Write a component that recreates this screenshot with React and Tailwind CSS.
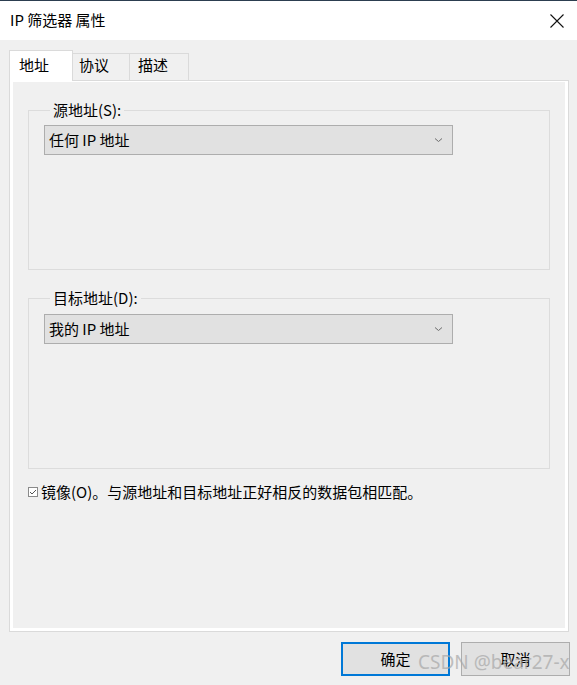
import React from "react";

const font = { fontFamily: '"Noto Sans CJK SC", "Noto Sans", sans-serif' };

function Chevron() {
  return (
    <svg width="9" height="6" viewBox="0 0 9 6" className="mr-[9px]">
      <path d="M1 1.5l3.5 3 3.5-3" fill="none" stroke="#6d6d6d" strokeWidth="1" />
    </svg>
  );
}

function Select({ value }) {
  return (
    <div className="flex h-[30px] w-[409px] items-center justify-between border border-[#adadad] bg-[#e1e1e1] pl-[4px] text-[15px] text-black">
      <span>{value}</span>
      <Chevron />
    </div>
  );
}

function Group({ label, value, tall }) {
  return (
    <fieldset
      className={
        tall
          ? "h-[181px] w-[522px] border border-[#dcdcdc] pl-[15px]"
          : "h-[170px] w-[522px] border border-[#dcdcdc] pl-[15px]"
      }
    >
      <legend className="ml-[6px] px-[3px] text-[15px] leading-[20px] text-black">
        {label}
      </legend>
      <div className={tall ? "mt-[6px]" : "mt-[5px]"}>
        <Select value={value} />
      </div>
    </fieldset>
  );
}

export default function App() {
  return (
    <div className="h-[685px] w-[577px] overflow-hidden bg-[#f0f0f0]" style={font}>
      <div className="flex h-[40px] items-center justify-between border-t border-[#2c3e50] bg-white pl-[10px] pr-[13px]">
        <span className="text-[15px] text-black">IP 筛选器 属性</span>
        <svg width="14" height="14" viewBox="0 0 14 14">
          <path d="M0.5 0.5l13 13M13.5 0.5l-13 13" stroke="#111" strokeWidth="1.1" />
        </svg>
      </div>

      <div className="relative px-[9px] pt-[10px]">
        <div className="relative z-10 flex items-end">
          <div className="h-[31px] w-[64px] border border-b-0 border-[#dadada] bg-white pl-[9px] pt-[3px] text-[15px] text-black">
            地址
          </div>
          <div className="mb-[1px] h-[27px] w-[57px] border border-b-0 border-l-0 border-[#dadada] bg-[#f0f0f0] pl-[6px] text-[15px] text-black">
            协议
          </div>
          <div className="mb-[1px] h-[27px] w-[59px] border border-b-0 border-l-0 border-[#dadada] bg-[#f0f0f0] pl-[8px] text-[15px] text-black">
            描述
          </div>
        </div>

        <div className="-mt-[1px] h-[552px] w-[560px] border border-[#dadada]">
          <div className="h-full w-full border-x-[3px] border-b-[3px] border-t border-white px-[15px] pt-[18px]">
            <Group label="源地址(S):" value="任何 IP 地址" />
            <div className="mt-[18px]">
              <Group label="目标地址(D):" value="我的 IP 地址" tall />
            </div>
            <div className="mt-[12px] flex items-center text-[15px] text-black">
              <svg width="10" height="10" viewBox="0 0 10 10" className="mr-[3px]">
                <rect x="0.5" y="0.5" width="9" height="9" fill="#fff" stroke="#8a8a8a" />
                <path d="M2 5l2 2 4-4" fill="none" stroke="#555" strokeWidth="1" />
              </svg>
              <span>镜像(O)。与源地址和目标地址正好相反的数据包相匹配。</span>
            </div>
          </div>
        </div>
      </div>

      <div className="relative mt-[10px] flex justify-end gap-[11px] pr-[7px]">
        <button className="h-[34px] w-[109px] border-2 border-[#0078d7] bg-[#e1e1e1] text-[15px] text-black">
          确定
        </button>
        <button className="h-[34px] w-[109px] border border-[#adadad] bg-[#e1e1e1] text-[15px] text-black">
          取消
        </button>
        <span
          className="pointer-events-none absolute left-[418px] top-[8px] text-[19px] leading-[24px] text-[#a8a8a8] opacity-70"
          style={{ fontFamily: '"Noto Sans", sans-serif' }}
        >
          CSDN @bear27-x
        </span>
      </div>
    </div>
  );
}
